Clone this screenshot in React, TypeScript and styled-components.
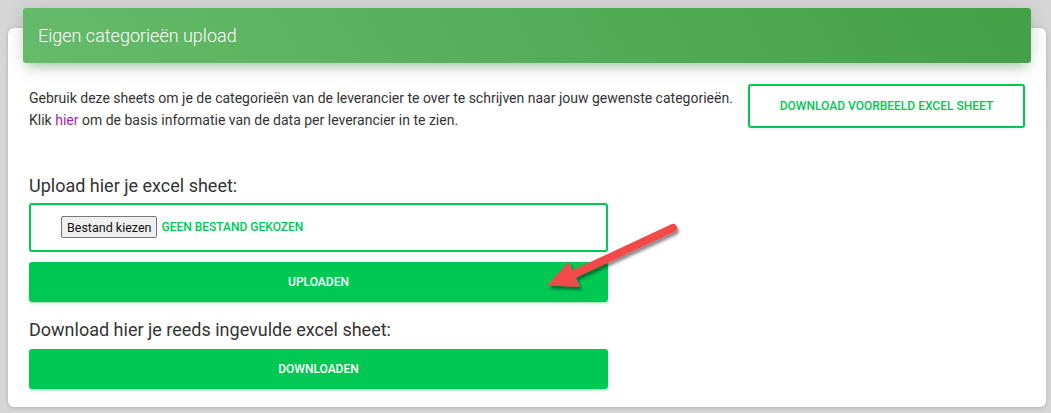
import styled, { createGlobalStyle } from 'styled-components';

const GlobalStyle = createGlobalStyle`
  html, body {
    margin: 0;
    padding: 0;
    background: #d6d6d6;
    font-family: Roboto, "Liberation Sans", Arial, sans-serif;
    color: #333;
  }
`;

const Page = styled.div`
  position: relative;
  width: 1051px;
  height: 413px;
  overflow: hidden;
  padding: 28px 5px 0 8px;
  box-sizing: border-box;
`;

const Card = styled.div`
  display: flow-root;
  background: #fff;
  border-radius: 6px;
  box-shadow: 0 1px 4px 0 rgba(0, 0, 0, 0.18);
  height: 379px;
  box-sizing: border-box;
`;

const CardHeader = styled.div`
  margin: -20px 15px 0;
  height: 55px;
  border-radius: 3px;
  background: linear-gradient(60deg, #66bb6a, #43a047);
  box-shadow: 0 4px 20px 0 rgba(0, 0, 0, 0.14), 0 7px 10px -5px rgba(76, 175, 80, 0.4);
  display: flex;
  align-items: center;
  padding: 0 15px;
`;

const Title = styled.h4`
  margin: 0;
  color: #fff;
  font-size: 18px;
  font-weight: 300;
  line-height: 1;
`;

const CardBody = styled.div`
  padding: 21px 21px 0 21px;
`;

const IntroRow = styled.div`
  display: flex;
  justify-content: space-between;
  align-items: flex-start;
`;

const Intro = styled.p`
  margin: 3px 0 0;
  font-size: 14px;
  line-height: 22px;
  color: #333;
`;

const Link = styled.a`
  color: #9c27b0;
  text-decoration: none;
`;

const OutlineButton = styled.button`
  width: 277px;
  height: 44px;
  background: #fff;
  border: 2px solid #00c853;
  border-radius: 3px;
  color: #00c853;
  font-family: inherit;
  font-size: 12px;
  font-weight: 500;
  text-transform: uppercase;
  cursor: pointer;
  box-shadow: 0 1px 3px rgba(0, 0, 0, 0.08);
`;

const Column = styled.div`
  width: 579px;
  display: flex;
  flex-direction: column;
`;

const SectionLabel = styled.h5<{ $top: number }>`
  margin: ${({ $top }) => $top}px 0 0;
  font-size: 18px;
  font-weight: 400;
  line-height: 22px;
  height: 22px;
  color: #333;
`;

const FileBox = styled.label`
  margin-top: 6px;
  height: 49px;
  box-sizing: border-box;
  border: 2px solid #00c853;
  border-radius: 3px;
  display: flex;
  align-items: flex-start;
  padding: 11px 30px 0;
  gap: 4px;
  cursor: pointer;

  input {
    display: none;
  }
`;

const FakeFileButton = styled.span`
  height: 22px;
  box-sizing: border-box;
  padding: 0 5px;
  display: inline-flex;
  align-items: center;
  background: #efefef;
  border: 1px solid #767676;
  border-radius: 2px;
  font-size: 12.5px;
  color: #111;
`;

const FileName = styled.span`
  height: 22px;
  display: inline-flex;
  align-items: center;
  color: #00c853;
  font-size: 12px;
  font-weight: 500;
  text-transform: uppercase;
`;

const SolidButton = styled.button<{ $top: number }>`
  margin-top: ${({ $top }) => $top}px;
  height: 40px;
  width: 100%;
  border: none;
  border-radius: 3px;
  background: #00c853;
  color: #fff;
  font-family: inherit;
  font-size: 12px;
  font-weight: 500;
  text-transform: uppercase;
  cursor: pointer;
  box-shadow: 0 2px 2px 0 rgba(0, 200, 83, 0.14), 0 3px 1px -2px rgba(0, 200, 83, 0.2),
    0 1px 5px 0 rgba(0, 200, 83, 0.12);
`;

const Arrow = styled.svg`
  position: absolute;
  left: 540px;
  top: 215px;
  width: 150px;
  height: 85px;
  pointer-events: none;
  overflow: visible;
`;

export default function App() {
  return (
    <>
      <GlobalStyle />
      <Page>
        <Card>
          <CardHeader>
            <Title>Eigen categorieën upload</Title>
          </CardHeader>
          <CardBody>
            <IntroRow>
              <Intro>
                Gebruik deze sheets om je de categorieën van de leverancier te over te schrijven naar jouw gewenste
                categorieën.
                <br />
                Klik <Link href="#">hier</Link> om de basis informatie van de data per leverancier in te zien.
              </Intro>
              <OutlineButton>Download voorbeeld excel sheet</OutlineButton>
            </IntroRow>
            <Column>
              <SectionLabel $top={44}>Upload hier je excel sheet:</SectionLabel>
              <FileBox>
                <input type="file" />
                <FakeFileButton>Bestand kiezen</FakeFileButton>
                <FileName>Geen bestand gekozen</FileName>
              </FileBox>
              <SolidButton $top={10}>Uploaden</SolidButton>
              <SectionLabel $top={17}>Download hier je reeds ingevulde excel sheet:</SectionLabel>
              <SolidButton $top={8}>Downloaden</SolidButton>
            </Column>
          </CardBody>
        </Card>
        <Arrow viewBox="0 0 150 85">
          <defs>
            <filter id="arrowShadow" x="-20%" y="-20%" width="140%" height="160%">
              <feDropShadow dx="2" dy="3" stdDeviation="1.5" floodColor="#000" floodOpacity="0.45" />
            </filter>
          </defs>
          <g filter="url(#arrowShadow)" fill="#f24949" stroke="#f24949">
            <line x1="133" y1="13" x2="30" y2="61" strokeWidth="8" strokeLinecap="round" />
            <polygon points="8,70 28.6,47.7 39.4,71.3" strokeWidth="1" strokeLinejoin="round" />
          </g>
        </Arrow>
      </Page>
    </>
  );
}
